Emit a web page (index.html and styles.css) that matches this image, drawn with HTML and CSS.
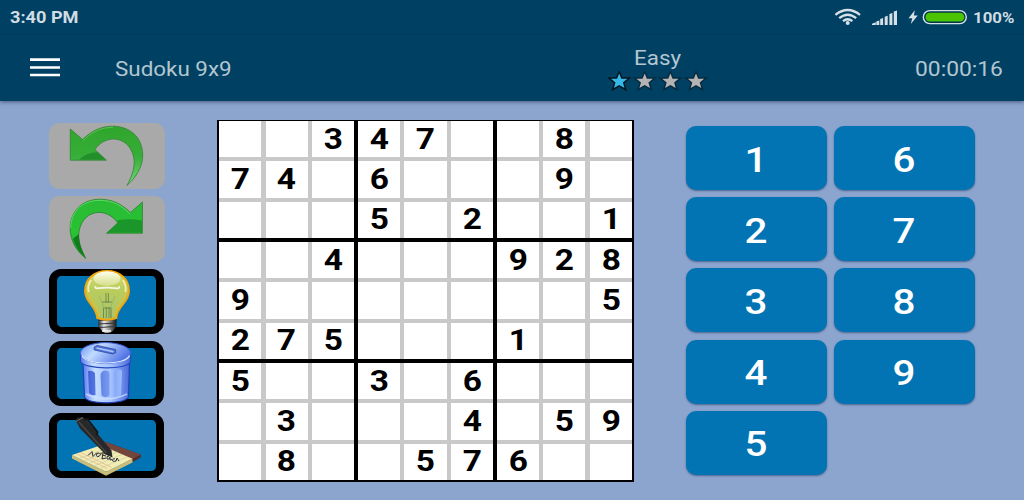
FILE: index.html
```
<!DOCTYPE html>
<html lang="en">
<head>
<meta charset="utf-8">
<title>Sudoku 9x9</title>
<link rel="stylesheet" href="styles.css">
</head>
<body>
<header class="header">
  <div class="status">
    <span class="clock wide">3:40 PM</span>
    <svg class="status-icons" width="142" height="34" viewBox="825 0 142 34">
      <g fill="none" stroke="#d5e1e7" stroke-width="2.3">
        <path d="M835.4 14.8Q847.7 5.2 860 14.8"/>
        <path d="M839.2 18.2Q847.7 11.2 856.2 18.2"/>
        <path d="M843 21.2Q847.7 17.2 852.4 21.2"/>
      </g>
      <circle cx="847.7" cy="23" r="2" fill="#d5e1e7"/>
      <path fill="#d5e1e7" d="M872 25v-1.2l3.8-1.6V25zM876.3 25v-3.4l3-1V25zM880.2 25v-6l2.9-1V25zM884.7 25v-8.2l3-1V25zM889.4 25v-11l3-1V25zM893.8 25V11.4l3.2-1V25z"/>
      <path fill="#d5e1e7" d="M914.8 10.3l-6.3 8h3.8l-1.5 5.6 7-8.3h-3.9z"/>
      <rect x="923.3" y="10.6" width="43" height="13" rx="6.5" fill="#00374f" stroke="#d5e1e7" stroke-width="1.4"/>
      <rect x="925.5" y="12.7" width="38.8" height="8.9" rx="4.4" fill="#4ac400"/>
    </svg>
    <span class="percent wide">100%</span>
  </div>
  <div class="toolbar">
    <svg class="menu" width="31" height="20" viewBox="0 0 31 20"><path d="M0 1.6h30M0 9.5h30M0 17h30" stroke="#fff" stroke-width="2.6"/></svg>
    <span class="title wide">Sudoku 9x9</span>
    <div class="level">
      <span class="level-name wide">Easy</span>
      <svg class="stars" width="100" height="20" viewBox="0 0 100 20">
        <defs><path id="star" d="M0-7.6L2.2-2.4H8.2L3.7 1.4 5.3 7 0 3.8-5.3 7-3.7 1.4-8.2-2.4H-2.2Z"/></defs>
        <g class="star-row">
          <use href="#star" x="11.2" y="10.1" fill="#37b6e8" stroke="#041722"/>
          <use href="#star" x="36.7" y="10.1" fill="#b4b4b4" stroke="#052c41"/>
          <use href="#star" x="62.4" y="10.1" fill="#b4b4b4" stroke="#052c41"/>
          <use href="#star" x="88" y="10.1" fill="#b4b4b4" stroke="#052c41"/>
        </g>
      </svg>
    </div>
    <span class="timer wide">00:00:16</span>
  </div>
</header>
<main class="main">
  <aside class="tools">
    <div class="tool disabled">
      <svg width="116" height="66" viewBox="0 0 116 66">
        <defs>
          <linearGradient id="undo" x1="0" y1="0" x2="0" y2="1"><stop offset="0" stop-color="#30a52c"/><stop offset=".5" stop-color="#36ae37"/><stop offset="1" stop-color="#72d675"/></linearGradient>
          <linearGradient id="redo" x1="0" y1="0" x2="0" y2="1"><stop offset="0" stop-color="#2abb36"/><stop offset=".6" stop-color="#28c332"/><stop offset="1" stop-color="#168a20"/></linearGradient>
        </defs>
        <path d="M21.3 6L33.5 16.5C43 7.5 52 3.3 64 3.2 81 3.5 93.5 14 93.7 32 93.8 45 86 55 78 62.5 84 51 86.3 43 84.7 34 82 22 73.5 16 64.5 16 57 16.1 49.5 20.5 46 26.7L57.5 37.2H21.3Z" fill="url(#undo)" stroke="#348237" stroke-width=".8"/>
        <path d="M30 36.8C35 31.5 41 29.5 48.5 29.2L56.6 36.8Z" fill="#238f2a"/>
        <path d="M34 17.8C43 8.5 52 4.5 64 4.3" fill="none" stroke="#62c85b" stroke-width=".8"/>
      </svg>
    </div>
    <div class="tool disabled">
      <svg width="116" height="66" viewBox="0 0 116 66">
        <path d="M93.4 6L81.5 16.5C72 7.5 63 3.4 51 3.2 33.5 3.4 21.5 14.5 21.2 32 21 45 28 55.5 36.8 62.5 30.8 51 28.7 43 30.2 34.5 32.7 22.5 41 16.5 50 16.4 58 16.4 65 21.2 68.8 27L57.5 37.2H93.4Z" fill="url(#redo)" stroke="#2c7f31" stroke-width=".8"/>
        <path d="M69 26.5L68.3 24.2C76 22.5 85 23 93 24.5V36.8H58.4Z" fill="#1b962a"/>
        <path d="M24 42.8L29.9 38C29.8 47 32.5 54 36.2 61 30.5 56 26 50 24 42.8Z" fill="#117c1c"/>
        <path d="M21.8 32C22 14 34 4.5 51 4.3 63 4.5 72 8.5 81 18" fill="none" stroke="#5edf62" stroke-width=".9"/>
      </svg>
    </div>
    <div class="tool">
      <svg width="115" height="65" viewBox="0 0 115 65">
        <defs>
          <linearGradient id="bulb" x1="0" y1="0" x2="0" y2="1"><stop offset="0" stop-color="#d8dc72"/><stop offset=".4" stop-color="#b9cc5d"/><stop offset="1" stop-color="#a8c56c"/></linearGradient>
          <linearGradient id="screw"><stop offset="0" stop-color="#2c2c2c"/><stop offset=".3" stop-color="#eee"/><stop offset=".6" stop-color="#929292"/><stop offset="1" stop-color="#111"/></linearGradient>
          <linearGradient id="shine" x1="0" y1="0" x2="0" y2="1"><stop offset="0" stop-color="#fffff0"/><stop offset="1" stop-color="#e0e6a0" stop-opacity=".65"/></linearGradient>
        </defs>
        <path d="M49.5 48h18v9.5l-3 3.5c-2 4-10 4-12 0l-3-3.5z" fill="url(#screw)"/>
        <path d="M49.5 51.5l18-1M49.5 55l18-1M50 58.5l17-1" stroke="#343434" stroke-width="1"/>
        <path d="M53 62h9" stroke="#eee" stroke-width="1.6"/>
        <path d="M58 2C45 2 36 10 36 22 36 34 47 36 48.2 49Q58 52.5 67.3 49C68.5 36 80 34 80 22 80 10 71 2 58 2Z" fill="url(#bulb)" stroke="#f3a50c" stroke-width="1.9"/>
        <path d="M38 20C39 31 49 35 50.5 47M78 20C77 31 67 35 65.5 47" fill="none" stroke="#e7bd30" stroke-width="1.5" opacity=".8"/>
        <ellipse cx="58" cy="9.6" rx="13.4" ry="7.4" fill="url(#shine)"/>
        <path d="M46.5 17q-1 3 3 2.2Q59 18 66 19.2q5 1 4-2" fill="none" stroke="#fff" stroke-width="1.8" opacity=".85"/>
        <path d="M39.7 23q-1.6-7 2.5-12M76.3 23q1.6-7-2.5-12" fill="none" stroke="#fffccf" stroke-width="1.8" opacity=".75"/>
        <path d="M50 27l4.5 10v12M66 27l-4 10v12" fill="none" stroke="#8ea55c" stroke-width=".5"/>
        <path d="M57 24v10M59.4 24v10M53 33h10M54.5 49V39h7.5v10M57.3 49V38M60 49V38" fill="none" stroke="#66824a" stroke-width=".8"/>
      </svg>
    </div>
    <div class="tool">
      <svg width="115" height="65" viewBox="0 0 115 65">
        <defs>
          <linearGradient id="can"><stop offset="0" stop-color="#587bee"/><stop offset=".25" stop-color="#c5ddff"/><stop offset=".6" stop-color="#a5c3ff"/><stop offset="1" stop-color="#4867da"/></linearGradient>
          <linearGradient id="lid" x1="0" y1="0" x2="1" y2=".4"><stop offset="0" stop-color="#648df7"/><stop offset=".4" stop-color="#c2dcff"/><stop offset="1" stop-color="#5475e6"/></linearGradient>
          <linearGradient id="slot"><stop offset="0" stop-color="#4262d8"/><stop offset="1" stop-color="#9bbcff"/></linearGradient>
        </defs>
        <path d="M34 23L35.5 56Q38 61.5 57.5 61.8 76 61.5 79.5 56L80.5 23Z" fill="url(#can)" stroke="#2340b8" stroke-width="1.2"/>
        <path d="M39 30q4-1 7 2l.5 22q-4 1-6.500-2zM51.500 34q1-5 5-4.500 4 0 4 4v21q-4 3-8 0zM65 32q1-4 5-3.500 3 0 3 3l-1 22q-3 4-6 3z" fill="url(#slot)"/>
        <path d="M37 53q20 10 41 0" fill="none" stroke="#d2e4ff" stroke-width="1.5" opacity=".7"/>
        <path d="M31.500 12.500V20.500C35 28.500 79 29.500 81.500 20.500V12.500Z" fill="url(#can)" stroke="#2848c0" stroke-width="1.1"/>
        <ellipse cx="56.500" cy="12" rx="25" ry="10.400" fill="url(#lid)" stroke="#3f62da" stroke-width="1"/>
        <path d="M33 14.500C35 24 77 25 80.500 14.500" fill="none" stroke="#dceaff" stroke-width="1.2"/>
        <path d="M45 6.200l3.200-1.800 18.500 4.200v3.200l-3 1.200L45.200 9z" fill="#5272d4" stroke="#2c469e" stroke-width=".8"/>
        <path d="M47.500 7l17 3.700" stroke="#a8c7ff" stroke-width="1.500"/>
      </svg>
    </div>
    <div class="tool">
      <svg width="115" height="65" viewBox="0 0 115 65">
        <path d="M57 29L91.8 41.5V44.5L78 52 50 36Z" fill="#502e29"/>
        <path d="M57 29L91.8 41.5 83.5 46 51.5 33Z" fill="#73463d"/>
        <path d="M23 42V45.5L57 62.8 83.5 49.5V45.8L57.2 58.8Z" fill="#c9bd79"/>
        <path d="M23 42L52 32.3 83.500 45.8 57.2 58.8Z" fill="#f2ebb2"/>
        <path d="M27 40.6l31.5 15M31 39.3l31.5 15" stroke="#e8b08d" stroke-width=".7"/>
        <path d="M31 45l28-10M36 47.5l28-10.5M41 50l27-11M46 52.5l27-11M52 55l26-11" stroke="#bccca4" stroke-width=".6"/>
        <path d="M39 42.500l4-4 1 5 4-4M50 40q-3 0-2.500 2.500t3 .5-.5-3M54 40l-1 6 4-1M53 42l4 1M60 43q-3 0-2 3 2 1 3-2v3l2-.5M66 46q-2-1-2.500 1t3.500 1l1-3 2 3" fill="none" stroke="#2b2942" stroke-width="1"/>
        <path d="M48 41l14 .5-7-3z" fill="#77704e"/>
        <path d="M26.5 7Q28 3.5 33 4.3L36.5 6 62.500 37.500 63.500 44.500 56.5 41.500 31 15.5Z" fill="#282828"/>
        <path d="M30 9L57.5 40" stroke="#464646" stroke-width="1.5"/>
        <path d="M35.5 6.5l3-.2 10 13-1 3" fill="none" stroke="#171717" stroke-width="2"/>
        <path d="M27 8.5l7-4" stroke="#6d6d6d" stroke-width="1"/>
      </svg>
    </div>
  </aside>
  <section class="board">
    <div class="box"><b></b><b></b><b><span>3</span></b><b><span>7</span></b><b><span>4</span></b><b></b><b></b><b></b><b></b></div>
    <div class="box"><b><span>4</span></b><b><span>7</span></b><b></b><b><span>6</span></b><b></b><b></b><b><span>5</span></b><b></b><b><span>2</span></b></div>
    <div class="box"><b></b><b><span>8</span></b><b></b><b></b><b><span>9</span></b><b></b><b></b><b></b><b><span>1</span></b></div>
    <div class="box"><b></b><b></b><b><span>4</span></b><b><span>9</span></b><b></b><b></b><b><span>2</span></b><b><span>7</span></b><b><span>5</span></b></div>
    <div class="box"><b></b><b></b><b></b><b></b><b></b><b></b><b></b><b></b><b></b></div>
    <div class="box"><b><span>9</span></b><b><span>2</span></b><b><span>8</span></b><b></b><b></b><b><span>5</span></b><b><span>1</span></b><b></b><b></b></div>
    <div class="box"><b><span>5</span></b><b></b><b></b><b></b><b><span>3</span></b><b></b><b></b><b><span>8</span></b><b></b></div>
    <div class="box"><b><span>3</span></b><b></b><b><span>6</span></b><b></b><b></b><b><span>4</span></b><b></b><b><span>5</span></b><b><span>7</span></b></div>
    <div class="box"><b></b><b></b><b></b><b></b><b><span>5</span></b><b><span>9</span></b><b><span>6</span></b><b></b><b></b></div>
  </section>
  <section class="keypad">
    <div class="key"><span>1</span></div>
    <div class="key"><span>2</span></div>
    <div class="key"><span>3</span></div>
    <div class="key"><span>4</span></div>
    <div class="key"><span>5</span></div>
    <div class="key"><span>6</span></div>
    <div class="key"><span>7</span></div>
    <div class="key"><span>8</span></div>
    <div class="key"><span>9</span></div>
  </section>
</main>
</body>
</html>
```
FILE: styles.css
```
* { box-sizing: border-box; }
body {
  margin: 0;
  width: 1024px;
  height: 500px;
  overflow: hidden;
  background: #8ba5cf;
  font-family: Roboto, sans-serif;
}
svg { display: block; }
.wide {
  display: block;
  white-space: nowrap;
  transform: scaleX(1.152);
  transform-origin: left center;
}
.header {
  height: 101px;
  background: #004163;
  box-shadow: 0 1px 4px rgba(30, 40, 80, .6);
}
.status {
  display: flex;
  height: 35px;
  padding-left: 10px;
  border-bottom: 1px solid #003a58;
  color: #d0dde4;
  font-weight: 700;
  line-height: 36px;
}
.clock { width: 815px; font-size: 16px; transform: scaleX(1.135); }
.status-icons { flex: none; }
.percent { margin-left: 6px; font-size: 15px; transform: scaleX(1.12); }
.toolbar {
  display: flex;
  height: 66px;
  color: #b3c6d1;
  line-height: 24px;
}
.menu { flex: none; margin: 23px 54px 0 30px; }
.title { width: 493px; padding-top: 22px; font-size: 20px; transform: scaleX(1.12); }
.level { width: 100px; margin-right: 207px; }
.level-name { padding: 11px 0 0 26px; font-size: 20px; transform: scaleX(1.12); transform-origin: 26px center; }
.stars { margin-top: 1px; }
.star-row { stroke-width: 3px; paint-order: stroke; }
.timer { padding-top: 22px; font-size: 20px; transform: scaleX(1.14); }
.main { display: flex; }
.tools {
  display: flex;
  flex-direction: column;
  gap: 7px;
  width: 116px;
  margin: 22px 52px 0 49px;
}
.tool {
  width: 115px;
  height: 65px;
  border: solid #000;
  border-width: 7px 8px;
  border-radius: 12px;
  background: #0274b3;
}
.tool:not(.disabled) svg { margin: -7px -8px; }
.tool.disabled {
  width: 116px;
  height: 66px;
  border: 0;
  border-radius: 10px;
  background: #a9a9a9;
}
.board {
  display: grid;
  grid-template: repeat(3, 1fr) / repeat(3, 1fr);
  gap: 4px 3.7px;
  width: 417px;
  height: 362px;
  margin-top: 19px;
  padding: 1px 2px 2px;
  background: #000;
}
.box {
  display: grid;
  grid-template: repeat(3, 1fr) / repeat(3, 1fr);
  gap: 4px 4.4px;
  background: #c9c9c9;
}
.box b {
  display: flex;
  align-items: center;
  justify-content: center;
  min-height: 0;
  padding-bottom: 1px;
  background: #fff;
  font-size: 29px;
  line-height: 30px;
}
.box span { transform: scaleX(1.152); }
.keypad {
  display: grid;
  grid-template-rows: repeat(5, 64px);
  grid-auto-columns: 141px;
  grid-auto-flow: column;
  gap: 7.2px 7px;
  margin: 25px 0 0 52px;
}
.key {
  display: flex;
  align-items: center;
  justify-content: center;
  padding: 4px 2px 0 0;
  border-radius: 10px;
  background: #0274b3;
  box-shadow: 0 1px 2px rgba(30, 50, 90, .55);
  color: #fff;
  font-size: 35px;
  font-weight: 500;
}
.key span { transform: scaleX(1.152); }
```
